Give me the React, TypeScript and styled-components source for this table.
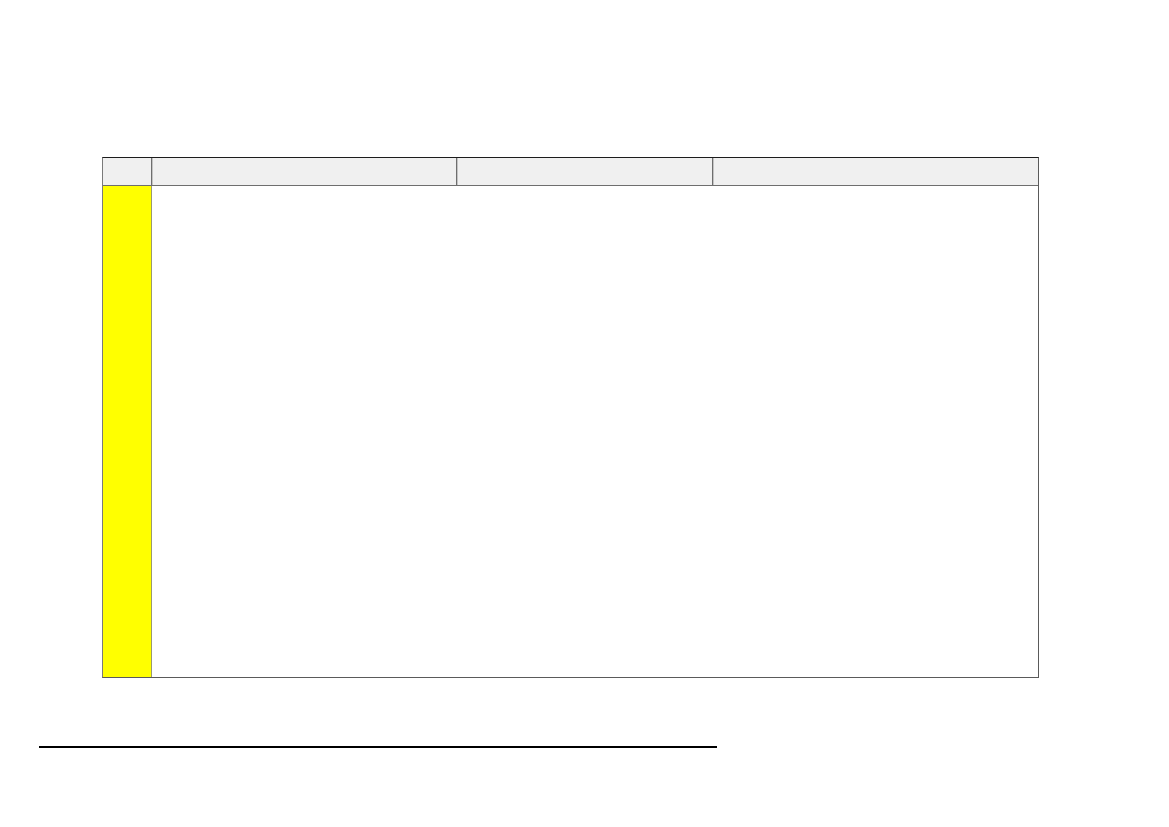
import React from 'react';
import styled, { createGlobalStyle } from 'styled-components';

const GlobalStyle = createGlobalStyle`
  html, body {
    margin: 0;
    padding: 0;
    background: #ffffff;
    font-family: "Liberation Sans", Arial, sans-serif;
  }
`;

const columns = [49, 305, 256, 325];

/** 빈 시트 페이지 */
const App = () => {
  return (
    <Page>
      <GlobalStyle />
      <Sheet>
        <HeaderRow>
          {columns.map((w, i) => (
            <HeaderCell key={i} style={{ width: w }} last={i === columns.length - 1} />
          ))}
        </HeaderRow>
        <BodyRow>
          <MarkerCell />
          <BodyFill />
        </BodyRow>
      </Sheet>
      <FooterRule />
    </Page>
  );
};

export default App;

const Page = styled.div`
  width: 1169px;
  height: 827px;
  padding-top: 157px;
  box-sizing: border-box;
  display: flex;
  flex-direction: column;
`;

const Sheet = styled.div`
  margin-left: 102px;
  width: 937px;
  height: 521px;
  box-sizing: border-box;
  border: 1px solid #5a5a5a;
  border-top-color: #1c1c1c;
  border-left-color: #7a7a7a;
  display: flex;
  flex-direction: column;
`;

const HeaderRow = styled.div`
  display: flex;
  box-sizing: border-box;
  height: 28px;
  flex-shrink: 0;
  background: #f0f0f0;
  border-bottom: 1px solid #6e6e6e;
  box-shadow: 0 1px 0 #c8c8c8;
`;

const HeaderCell = styled.div<{ last?: boolean }>`
  box-sizing: border-box;
  height: 100%;
  flex-shrink: 0;
  border-right: ${(p) => (p.last ? 'none' : '1px solid #6e6e6e')};
  box-shadow: ${(p) => (p.last ? 'none' : '1px 0 0 #c4c4c4')};
  &:last-child {
    flex: 1;
  }
`;

const BodyRow = styled.div`
  flex: 1;
  display: flex;
`;

const MarkerCell = styled.div`
  width: 48px;
  background: #ffff00;
  border-right: 1px solid #9a9a70;
`;

const BodyFill = styled.div`
  flex: 1;
  background: #ffffff;
`;

const FooterRule = styled.div`
  margin-left: 39px;
  margin-top: 68px;
  width: 678px;
  height: 2px;
  background: #000000;
`;
